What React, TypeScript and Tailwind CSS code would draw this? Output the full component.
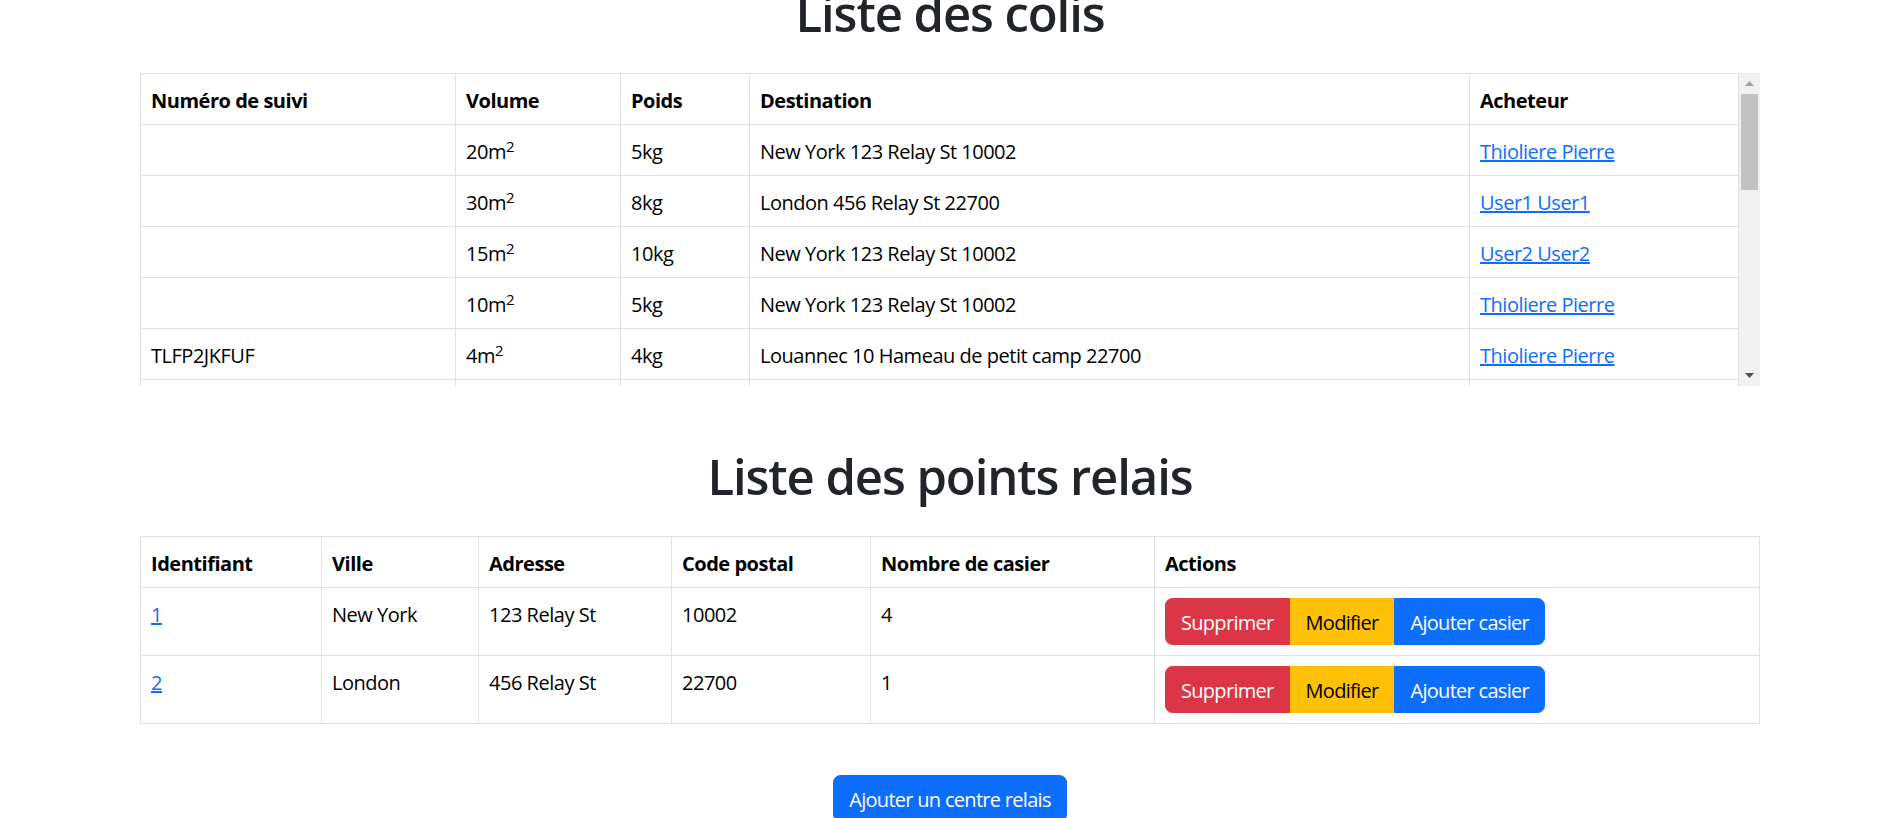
import { Fragment } from 'react';

type Colis = {
  suivi: string;
  volume: string;
  poids: string;
  destination: string;
  acheteur: string;
};

type Relais = {
  id: number;
  ville: string;
  adresse: string;
  codePostal: string;
  casiers: number;
};

const colis: Colis[] = [
  { suivi: '', volume: '20', poids: '5', destination: 'New York 123 Relay St 10002', acheteur: 'Thioliere Pierre' },
  { suivi: '', volume: '30', poids: '8', destination: 'London 456 Relay St 22700', acheteur: 'User1 User1' },
  { suivi: '', volume: '15', poids: '10', destination: 'New York 123 Relay St 10002', acheteur: 'User2 User2' },
  { suivi: '', volume: '10', poids: '5', destination: 'New York 123 Relay St 10002', acheteur: 'Thioliere Pierre' },
  { suivi: 'TLFP2JKFUF', volume: '4', poids: '4', destination: 'Louannec 10 Hameau de petit camp 22700', acheteur: 'Thioliere Pierre' },
  { suivi: 'KQ8ZT3MWPA', volume: '6', poids: '3', destination: 'London 456 Relay St 22700', acheteur: 'User1 User1' },
  { suivi: 'PLX4R7DNVC', volume: '12', poids: '7', destination: 'New York 123 Relay St 10002', acheteur: 'User2 User2' },
  { suivi: 'BW2HJ9QEYT', volume: '8', poids: '2', destination: 'London 456 Relay St 22700', acheteur: 'Thioliere Pierre' },
  { suivi: 'ZR6NC1KFUA', volume: '25', poids: '12', destination: 'New York 123 Relay St 10002', acheteur: 'User1 User1' },
  { suivi: 'MT5GV8LQXS', volume: '3', poids: '1', destination: 'Louannec 10 Hameau de petit camp 22700', acheteur: 'User2 User2' },
  { suivi: 'HD3YP6WREK', volume: '18', poids: '9', destination: 'London 456 Relay St 22700', acheteur: 'Thioliere Pierre' },
  { suivi: 'CF9UJ2TBNM', volume: '5', poids: '2', destination: 'New York 123 Relay St 10002', acheteur: 'User1 User1' },
  { suivi: 'VN7EK4ZSQL', volume: '9', poids: '6', destination: 'London 456 Relay St 22700', acheteur: 'User2 User2' },
  { suivi: 'GA1WX5RPHD', volume: '14', poids: '8', destination: 'New York 123 Relay St 10002', acheteur: 'Thioliere Pierre' },
  { suivi: 'YS4LM8CJTO', volume: '7', poids: '4', destination: 'Louannec 10 Hameau de petit camp 22700', acheteur: 'User1 User1' },
  { suivi: 'EQ6BT3NVKW', volume: '11', poids: '5', destination: 'London 456 Relay St 22700', acheteur: 'User2 User2' },
];

const relais: Relais[] = [
  { id: 1, ville: 'New York', adresse: '123 Relay St', codePostal: '10002', casiers: 4 },
  { id: 2, ville: 'London', adresse: '456 Relay St', codePostal: '22700', casiers: 1 },
];

const cell = 'border border-[#dee2e6] px-[10px] pt-[12px] pb-[8px] align-top text-left';
const head = 'border border-[#dee2e6] px-[10px] pt-[12px] pb-[8px] align-bottom text-left font-bold';
const link = 'text-[#0d6efd] underline';
const btn = 'border px-[15px] pt-[9px] pb-[6px] tracking-[-0.035em]';
const title = 'text-center text-[49px] font-semibold leading-[60px] tracking-[-0.022em]';

export default function App() {
  return (
    <div className="min-h-screen bg-white font-['Open_Sans',sans-serif] text-[20px] leading-[30px] tracking-[-0.024em] text-[#212529]">
      <div className="flex justify-center pl-[7px]">
        <div className="-mt-[17px] w-[1620px] pb-10">
          <h1 className={`${title} mb-[30px]`}>Liste des colis</h1>

          <div className="flex h-[313px]">
            <div className="min-w-0 flex-1 overflow-y-auto [scrollbar-width:none]">
              <table className="w-full table-fixed border-collapse text-black">
                <colgroup>
                  <col className="w-[315px]" />
                  <col className="w-[165px]" />
                  <col className="w-[129px]" />
                  <col className="w-[720px]" />
                  <col />
                </colgroup>
                <thead>
                  <tr>
                    <th className={head}>Numéro de suivi</th>
                    <th className={head}>Volume</th>
                    <th className={head}>Poids</th>
                    <th className={head}>Destination</th>
                    <th className={head}>Acheteur</th>
                  </tr>
                </thead>
                <tbody>
                  {colis.map((c, i) => (
                    <tr key={i}>
                      <td className={cell}>{c.suivi}</td>
                      <td className={cell}>
                        {c.volume}m<sup className="relative -top-[0.5em] text-[0.75em] leading-none">2</sup>
                      </td>
                      <td className={cell}>{c.poids}kg</td>
                      <td className={cell}>{c.destination}</td>
                      <td className={cell}>
                        <a href="#" className={link}>{c.acheteur}</a>
                      </td>
                    </tr>
                  ))}
                </tbody>
              </table>
            </div>

            {/* scrollbar */}
            <div className="flex w-[21px] shrink-0 flex-col bg-[#f1f1f1]">
              <div className="flex h-[21px] items-center justify-center">
                <svg width="9" height="5" viewBox="0 0 9 5">
                  <polygon points="0,5 4.5,0 9,5" fill="#a3a3a3" />
                </svg>
              </div>
              <div className="mx-[2px] h-[96px] bg-[#c1c1c1]" />
              <div className="flex-1" />
              <div className="flex h-[21px] items-center justify-center">
                <svg width="9" height="5" viewBox="0 0 9 5">
                  <polygon points="0,0 9,0 4.5,5" fill="#505050" />
                </svg>
              </div>
            </div>
          </div>

          <h1 className={`${title} mb-[30px] mt-[60px]`}>Liste des points relais</h1>

          <table className="w-full table-fixed border-collapse text-black">
            <colgroup>
              <col className="w-[181px]" />
              <col className="w-[157px]" />
              <col className="w-[193px]" />
              <col className="w-[199px]" />
              <col className="w-[284px]" />
              <col />
            </colgroup>
            <thead>
              <tr>
                <th className={head}>Identifiant</th>
                <th className={head}>Ville</th>
                <th className={head}>Adresse</th>
                <th className={head}>Code postal</th>
                <th className={head}>Nombre de casier</th>
                <th className={head}>Actions</th>
              </tr>
            </thead>
            <tbody>
              {relais.map((r) => (
                <Fragment key={r.id}>
                  <tr>
                    <td className={cell}>
                      <a href="#" className={link}>{r.id}</a>
                    </td>
                    <td className={cell}>{r.ville}</td>
                    <td className={cell}>{r.adresse}</td>
                    <td className={cell}>{r.codePostal}</td>
                    <td className={cell}>{r.casiers}</td>
                    <td className="border border-[#dee2e6] p-[10px] align-top">
                      <div className="inline-flex">
                        <button type="button" className={`${btn} rounded-l-[7.5px] border-[#dc3545] bg-[#dc3545] text-white`}>
                          Supprimer
                        </button>
                        <button type="button" className={`${btn} border-[#ffc107] bg-[#ffc107] text-black`}>
                          Modifier
                        </button>
                        <button type="button" className={`${btn} rounded-r-[7.5px] border-[#0d6efd] bg-[#0d6efd] text-white`}>
                          Ajouter casier
                        </button>
                      </div>
                    </td>
                  </tr>
                </Fragment>
              ))}
            </tbody>
          </table>

          <div className="mt-[51px] flex justify-center">
            <button type="button" className={`${btn} rounded-[7.5px] border-[#0d6efd] bg-[#0d6efd] text-white`}>
              Ajouter un centre relais
            </button>
          </div>
        </div>
      </div>
    </div>
  );
}
